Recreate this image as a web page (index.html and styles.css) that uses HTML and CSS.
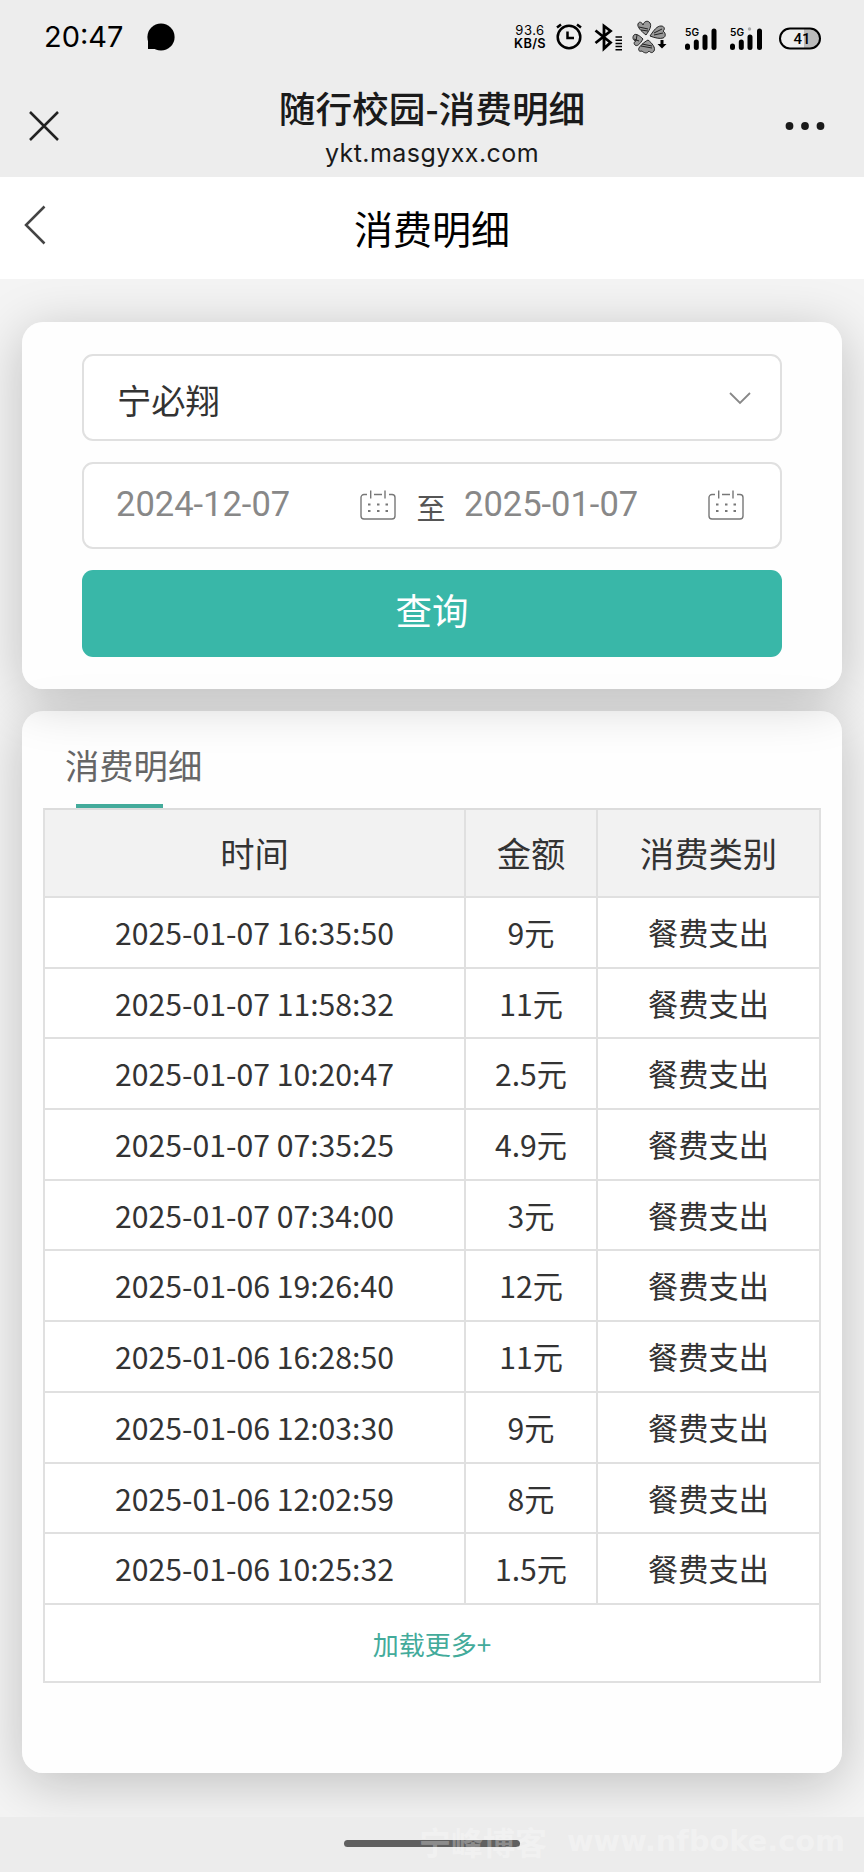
FILE: index.html
```html
<!DOCTYPE html>
<html lang="zh-CN">
<head>
<meta charset="utf-8">
<title>随行校园-消费明细</title>
<link rel="stylesheet" href="styles.css">
</head>
<body>
<div class="screen">
  <header class="top">
    <div class="status">
      <span class="clock">20:47</span>
      <svg class="chat" width="28" height="28" viewBox="0 0 28 28"><circle cx="14" cy="14" r="13.6"/><path d="M1 14v12h12z"/></svg>
      <div class="speed"><span>93.6</span><b>KB/S</b></div>
      <svg class="indicators" width="210" height="36" viewBox="0 0 210 36">
        <g fill="none" stroke="#000" stroke-width="2.5">
          <circle cx="19" cy="19" r="11.3"/>
          <path d="M17.5 13.5v6.500h6.500M7 9.500l4-3M31 9.500l-4-3"/>
          <path d="m45.500 12.500 15 12-6.500 6V8l6.500 5-15 12" stroke-width="2.800"/>
          <path d="M65.500 19h6.500M65.500 22.200h6.500M65.500 25.400h6.500M65.500 28.600h6.500M65.500 31.700h6.500" stroke-width="1.500"/>
        </g>
        <g fill="#999" stroke="#222" stroke-width="1">
          <path d="M96 17c-5-4-9-8-8-11s4-2 5 1c1-4 5-5 7-2s-1 8-4 12z"/>
          <path d="M100 18c4-6 7-10 11-10s4 4 2 5c3 2 3 6 0 7s-8 0-13-2z"/>
          <path d="M93 21c-3 5-6 8-8 6s0-4 1-4c-3 0-4-4-2-6s6 1 9 4z"/>
          <path d="M98 22c4 3 8 8 6 11s-4 1-5 0c-2 3-5 2-7 0-3 1-4-1-3-3s5-6 9-8z"/>
          <path d="m89 9 9 2m-7 1 7 1M104 15l8-4m-8 6 9-2M84 21l5 2m-2-6-1 6m6 3 10 2m-11 0 11 2" fill="none"/>
        </g>
        <path d="M110.500 22h3v4h3l-4.500 4.500-4.500-4.500h3z"/>
        <g fill="none" stroke="#000" stroke-linecap="round" stroke-width="5">
          <path d="M137.500 28v1.500M146.300 24v5.500M155 19v10.500M164 13v16.500"/>
          <path d="M182.500 28v1.500M191.300 24v5.500M200 19v10.500"/>
        </g>
        <circle cx="199.500" cy="11" r="1.700" fill="#aaa"/>
        <text class="net" x="135" y="18" textLength="14" lengthAdjust="spacingAndGlyphs">5G</text>
        <text class="net" x="180" y="18" textLength="14" lengthAdjust="spacingAndGlyphs">5G</text>
      </svg>
      <svg class="battery" width="68" height="36" viewBox="0 0 68 36">
        <path d="M5.500 13v16.500" stroke="#000" stroke-width="5" stroke-linecap="round"/>
        <path d="M50 11h6a8.500 8.500 0 0 1 0 19h-6z" fill="#bbb"/>
        <rect x="26" y="10.500" width="40" height="20" rx="10" fill="none" stroke="#000" stroke-width="2"/>
        <text class="level" x="39.500" y="26" textLength="17">41</text>
      </svg>
    </div>
    <div class="browser">
      <svg class="close" width="32" height="32" viewBox="0 0 32 32"><path d="m2 2 28 28M30 2 2 30"/></svg>
      <div class="page">
        <div class="page-name">随行校园-消费明细</div>
        <div class="domain">ykt.masgyxx.com</div>
      </div>
      <svg class="more" width="40" height="10" viewBox="0 0 40 10"><circle cx="4.500" cy="5" r="3.900"/><circle cx="20" cy="5" r="3.900"/><circle cx="35.500" cy="5" r="3.900"/></svg>
    </div>
  </header>
  <nav class="bar">
    <svg class="back" width="22" height="40" viewBox="0 0 22 40"><path d="M20.500 1.500 2 20l18.500 18.500"/></svg>
    <h1>消费明细</h1>
  </nav>
  <main>
    <section class="card filter">
      <div class="field">
        <span class="name">宁必翔</span>
        <svg class="down" width="22" height="13" viewBox="0 0 22 13"><path d="m1 1 10 10L21 1"/></svg>
      </div>
      <div class="field dates">
        <span class="date">2024-12-07</span>
        <svg class="cal" width="36" height="30" viewBox="0 0 36 30"><path d="M7 4.500H4A3 3 0 0 0 1 7.500v18.500a3 3 0 0 0 3 3h28a3 3 0 0 0 3-3V7.500a3 3 0 0 0-3-3h-3M14 4.500h8M10.700.5v8M25 .5v8"/><path d="M8 14.500h2.500M17 14.500h2.500M25.500 14.500H28M8 21h2.500M17 21h2.500M25.500 21H28" stroke-width="2"/></svg>
        <span class="to">至</span>
        <span class="date">2025-01-07</span>
        <svg class="cal" width="36" height="30" viewBox="0 0 36 30"><path d="M7 4.500H4A3 3 0 0 0 1 7.500v18.500a3 3 0 0 0 3 3h28a3 3 0 0 0 3-3V7.500a3 3 0 0 0-3-3h-3M14 4.500h8M10.700.5v8M25 .5v8"/><path d="M8 14.500h2.500M17 14.500h2.500M25.500 14.500H28M8 21h2.500M17 21h2.500M25.500 21H28" stroke-width="2"/></svg>
      </div>
      <button class="query">查询</button>
    </section>
    <section class="card detail">
      <h2><span>消费明细</span></h2>
      <div class="table">
        <div class="row head"><span>时间</span><span>金额</span><span>消费类别</span></div>
        <div class="row"><span>2025-01-07 16:35:50</span><span>9元</span><span>餐费支出</span></div>
        <div class="row"><span>2025-01-07 11:58:32</span><span>11元</span><span>餐费支出</span></div>
        <div class="row"><span>2025-01-07 10:20:47</span><span>2.5元</span><span>餐费支出</span></div>
        <div class="row"><span>2025-01-07 07:35:25</span><span>4.9元</span><span>餐费支出</span></div>
        <div class="row"><span>2025-01-07 07:34:00</span><span>3元</span><span>餐费支出</span></div>
        <div class="row"><span>2025-01-06 19:26:40</span><span>12元</span><span>餐费支出</span></div>
        <div class="row"><span>2025-01-06 16:28:50</span><span>11元</span><span>餐费支出</span></div>
        <div class="row"><span>2025-01-06 12:03:30</span><span>9元</span><span>餐费支出</span></div>
        <div class="row"><span>2025-01-06 12:02:59</span><span>8元</span><span>餐费支出</span></div>
        <div class="row"><span>2025-01-06 10:25:32</span><span>1.5元</span><span>餐费支出</span></div>
        <div class="load">加载更多+</div>
      </div>
    </section>
  </main>
  <footer class="gesture">
    <div class="pill"></div>
    <div class="mark"><span class="mark-name">宁峰博客</span><span class="mark-url">www.nfboke.com</span></div>
  </footer>
</div>
</body>
</html>
```
FILE: styles.css
```css
* { box-sizing: border-box; }
body { margin: 0; font-family: "Noto Sans CJK SC", sans-serif; color: #333; }
h1, h2 { margin: 0; font-weight: 400; }
svg { display: block; flex: none; }
.screen { width: 864px; height: 1872px; display: flex; flex-direction: column; overflow: hidden; }

.top { height: 177px; background: #ededed; flex: none; }
.status { height: 72px; display: flex; align-items: center; padding-left: 44px; color: #000; }
.clock { font: 400 29px/40px Inter, sans-serif; width: 103px; padding-top: 2px; }
.chat { margin-top: 2px; }
.speed { width: 34px; margin-left: 338px; margin-top: 2px; font: 13px/13px Inter, sans-serif; display: flex; flex-direction: column; align-items: center; white-space: nowrap; }
.speed span { letter-spacing: .5px; }
.speed b { font-weight: 600; font-size: 12.800px; letter-spacing: .3px; }
.indicators { margin-left: 3px; }
.battery { margin-left: -6px; }
.net { font: 600 10px Inter, sans-serif; }
.level { font: 500 15px Roboto, sans-serif; }
.browser { height: 105px; display: grid; grid-template-columns: 120px 1fr 120px; }
.close { margin: 38px 0 0 28px; }
.close path { fill: none; stroke: #222; stroke-width: 2.500; }
.page { text-align: center; color: #1a1a1a; }
.page-name { font-size: 36.700px; font-weight: 500; line-height: 54px; margin-top: 8px; white-space: nowrap; }
.domain { font: 25px/34px Inter, sans-serif; letter-spacing: .45px; margin-top: 2px; }
.more { margin: 49px 0 0 41px; fill: #1a1a1a; }

.bar { height: 102px; background: #fff; flex: none; display: grid; grid-template-columns: 100px 1fr 100px; }
.back { margin: 28px 0 0 24px; }
.back path { fill: none; stroke: #444; stroke-width: 2.500; }
.bar h1 { text-align: center; color: #000; font-size: 39px; line-height: 100px; }

main { height: 1538px; flex: none; background: #f4f4f4; overflow: hidden; padding: 43px 22px 0; display: flex; flex-direction: column; gap: 22px; }
.card { border-radius: 21px; background: rgba(255, 255, 255, .85); box-shadow: 0 10px 54px rgba(0, 0, 0, .22); flex: none; }
.filter { height: 367px; padding: 32px 60px; display: flex; flex-direction: column; gap: 21px; position: relative; z-index: 1; }
.field { height: 87px; border: 2px solid #e0e0e0; border-radius: 11px; background: #fff; display: flex; align-items: center; padding: 0 29px 0 33px; }
.name { font-size: 34.300px; flex: 1; line-height: 50px; padding-top: 2px; }
.down { fill: none; stroke: #888; stroke-width: 1.800; margin-top: 2px; }
.dates { padding: 0 35px 0 32px; }
.date { font: 34.500px/40px Roboto, sans-serif; color: #888; width: 244px; padding-bottom: 3px; }
.cal { fill: none; stroke: #777; stroke-width: 1.400; margin-bottom: 2px; }
.to { font-size: 29px; line-height: 40px; color: #555; width: 68px; text-align: center; padding: 2px 0 0 2px; }
.query { height: 87px; border: 0; border-radius: 11px; background: #39b7a8; color: #fff; font: 36.500px/60px "Noto Sans CJK SC", sans-serif; padding: 0 0 7px; }

.detail { height: 1062px; padding: 0 22px; }
.detail h2 { height: 97px; display: flex; flex-direction: column; color: #666; font-size: 34.300px; line-height: 50px; padding: 28px 0 0 21px; justify-content: space-between; }
.detail h2::after { content: ""; width: 87px; height: 4px; margin-left: 11px; background: #43ab9b; }
.table { width: 778px; margin-left: -1px; border: 2px solid #e0e0e0; border-top-color: #dcdcdc; background: #fff; }
.row { display: grid; grid-template-columns: 419px 132px 1fr; height: 70.700px; border-bottom: 2px solid #e0e0e0; text-align: center; font-size: 30.200px; line-height: 69px; white-space: nowrap; }
.row span + span { border-left: 2px solid #e0e0e0; }
.head { height: 88px; background: #f2f2f2; font-size: 34.300px; line-height: 84px; }
.load { height: 76px; text-align: center; color: #43ab9b; font-size: 26px; line-height: 78px; }

.gesture { height: 55px; flex: none; background: #ececec; position: relative; padding-top: 23px; }
.pill { width: 176px; height: 7px; border-radius: 4px; background: #606060; margin: 0 auto; }
.mark { position: absolute; right: 19px; top: 4px; display: flex; gap: 20px; align-items: center; white-space: nowrap; color: rgba(255, 255, 255, .3); line-height: 40px; font-weight: 700; }
.mark-name { font-size: 32px; }
.mark-url { font: 700 28.800px/40px "DejaVu Sans", sans-serif; }
```
